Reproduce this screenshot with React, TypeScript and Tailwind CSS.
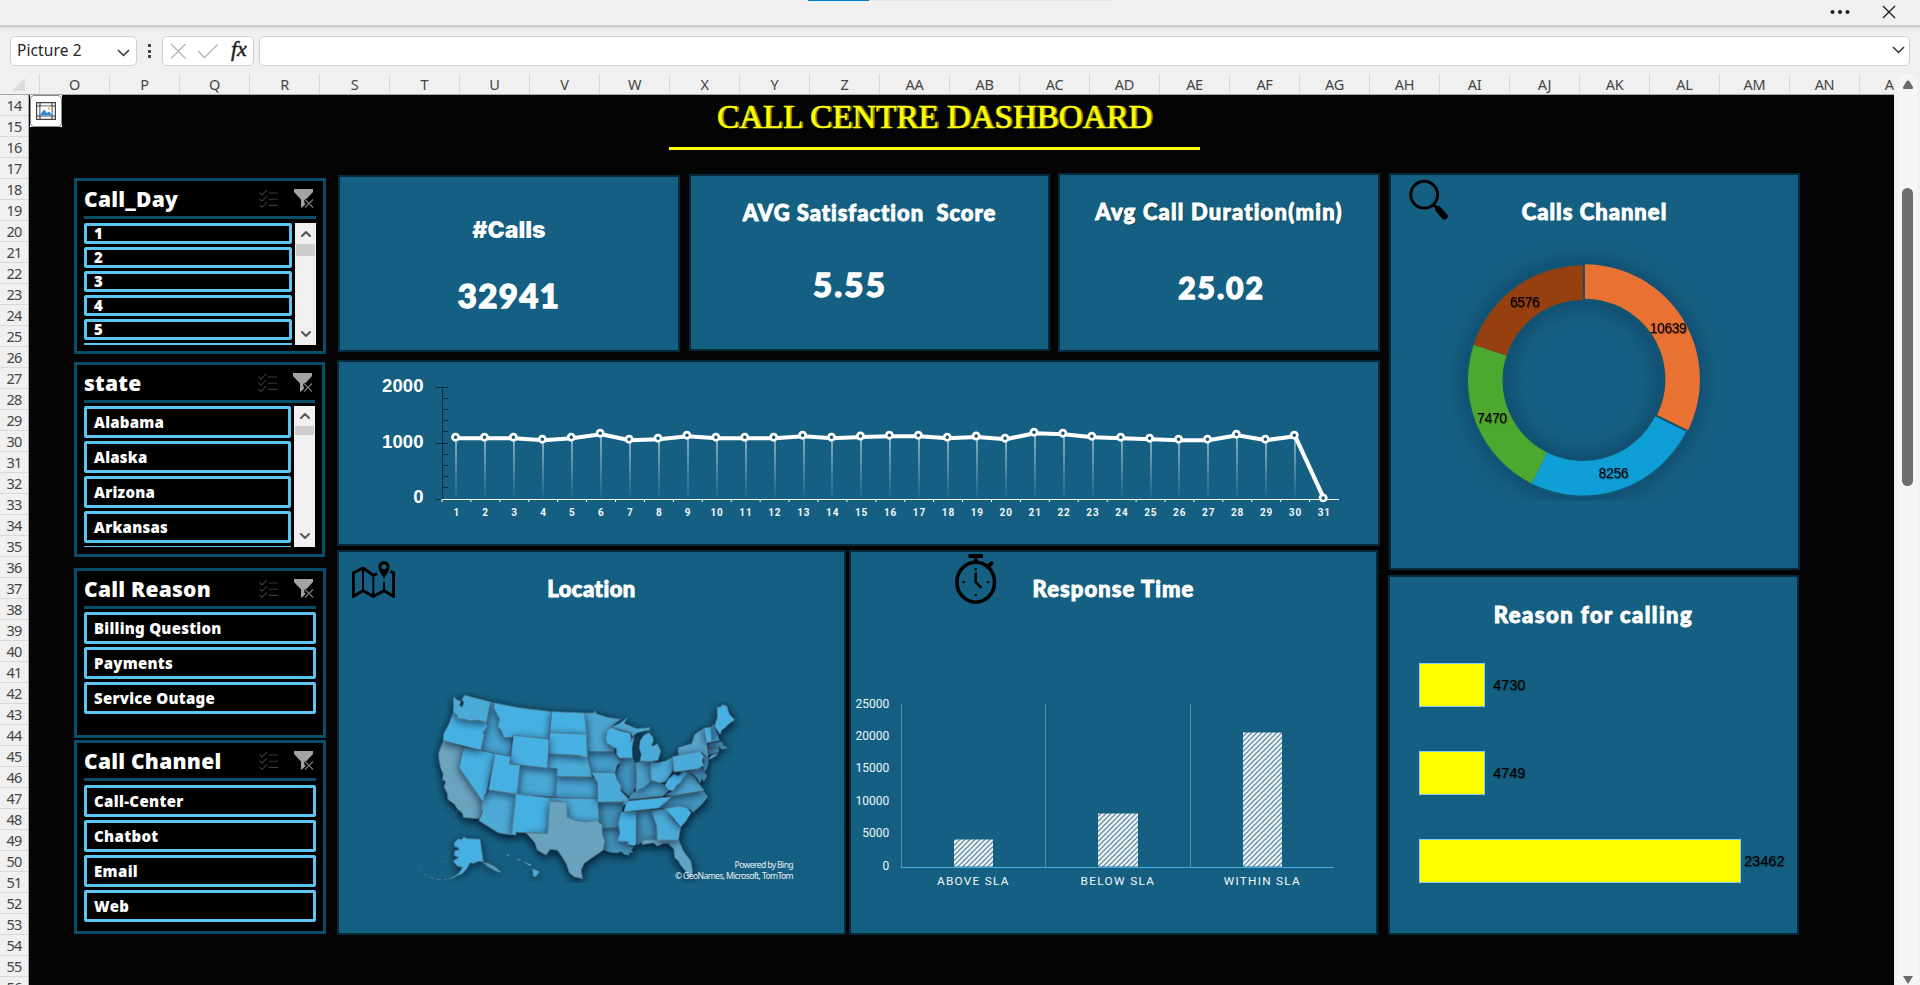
import React from "react";
import { ChevronDown, ChevronUp } from "lucide-react";

const columns = [
  "O", "P", "Q", "R", "S", "T", "U", "V", "W", "X", "Y", "Z", "AA", "AB", "AC", "AD", "AE", "AF", "AG",
  "AH", "AI", "AJ", "AK", "AL", "AM", "AN", "AO",
];
const rows = Array.from({ length: 43 }, (_, i) => i + 14);

/* ---------- Excel chrome ---------- */

function TitleStrip() {
  return (
    <div className="flex h-[25px] shrink-0 items-start justify-between bg-[#f0f0f0]">
      <div className="ml-[808px] flex h-px w-[304px] bg-[#e2e2e2]">
        <div className="h-px w-[61px] bg-[#0078d4]" />
      </div>
      <div className="flex h-[24px] items-center gap-[32px] pr-[24px]">
        <svg width="20" height="6" viewBox="0 0 20 6" fill="#1f1f1f">
          <circle cx="2.5" cy="3" r="2" />
          <circle cx="10" cy="3" r="2" />
          <circle cx="17.5" cy="3" r="2" />
        </svg>
        <svg width="14" height="14" viewBox="0 0 14 14" stroke="#1f1f1f" strokeWidth="1.4">
          <path d="M1 1 L13 13 M13 1 L1 13" />
        </svg>
      </div>
    </div>
  );
}

function FormulaBar() {
  return (
    <div className="flex h-[49px] shrink-0 items-start border-t-2 border-[#cbcbcb] bg-[#f0f0f0] pt-[9px] pl-[10px] shadow-[inset_0_3px_3px_-1px_#e2e2e2]">
      <div className="flex h-[30px] w-[127px] items-center justify-between rounded-[5px] border border-[#cfcfcf] bg-white pr-[6px] pl-[6px]">
        <span className="font-['Noto_Sans',sans-serif] text-[15.5px] tracking-[0.1px] text-[#262626]">Picture 2</span>
        <svg width="13" height="8" viewBox="0 0 13 8" fill="none" stroke="#333" strokeWidth="1.5" className="mt-[3px]">
          <path d="M1 1 L6.5 6.5 L12 1" />
        </svg>
      </div>
      <div className="flex h-[30px] w-[25px] flex-col items-center justify-center gap-[2.5px]">
        <i className="size-[3px] bg-[#444]" />
        <i className="size-[3px] bg-[#444]" />
        <i className="size-[3px] bg-[#444]" />
      </div>
      <div className="flex h-[30px] w-[92px] items-center rounded-[5px] border border-[#cfcfcf] bg-white pl-[5px]">
        <svg width="20" height="18" viewBox="0 0 20 18" fill="none" stroke="#b5b5b5" strokeWidth="1.4">
          <path d="M3 2 L17.5 16.5 M17.5 2 L3 16.5" />
        </svg>
        <svg width="22" height="18" viewBox="0 0 22 18" fill="none" stroke="#b5b5b5" strokeWidth="1.4" className="ml-[9px]">
          <path d="M1 9 L7.5 15.5 L20.5 2.5" />
        </svg>
        <span className="ml-[12px] pb-[4px] font-['Liberation_Serif',serif] text-[22px] leading-none text-[#222] italic [-webkit-text-stroke:0.5px_#222]">
          fx
        </span>
      </div>
      <div className="ml-[5px] flex h-[30px] w-[1651px] items-center justify-end rounded-[5px] border border-[#cfcfcf] bg-white pr-[4px]">
        <svg width="13" height="8" viewBox="0 0 13 8" fill="none" stroke="#333" strokeWidth="1.5" className="mb-[2px]">
          <path d="M1 1 L6.5 6.5 L12 1" />
        </svg>
      </div>
    </div>
  );
}

function ColumnHeader() {
  return (
    <div className="flex h-[21px] w-[1894px] shrink-0 overflow-hidden border-b border-[#a9a9a9] bg-[#f0f0f0]">
      <div className="flex w-[40px] shrink-0 items-end justify-end border-r border-[#d8d8d8] pr-[14px] pb-[3px]">
        <svg width="13" height="13" viewBox="0 0 13 13">
          <path d="M13 0 V13 H0 Z" fill="#dcdcdc" />
        </svg>
      </div>
      {columns.map((c) => (
        <div
          key={c}
          className="flex w-[70px] shrink-0 items-center justify-center border-r border-[#d8d8d8] font-['Noto_Sans',sans-serif] text-[14.5px] leading-none tracking-[-0.3px] text-[#444]"
        >
          {c}
        </div>
      ))}
    </div>
  );
}

function RowHeader() {
  return (
    <div className="h-[890px] w-[29px] shrink-0 overflow-hidden border-r border-[#a9a9a9] bg-[#f0f0f0]">
      {rows.map((r) => (
        <div
          key={r}
          className="flex h-[21px] items-center justify-center border-b border-[#d8d8d8] font-['Noto_Sans',sans-serif] text-[14.5px] leading-none tracking-[-0.8px] text-[#444]"
        >
          {r}
        </div>
      ))}
    </div>
  );
}

function PageScrollbar() {
  return (
    <div className="flex h-[911px] w-[21px] shrink-0 flex-col items-center rounded-t-[10px] bg-[#f5f5f5]">
      <svg width="12" height="10" viewBox="0 0 12 10" className="mt-[6px]">
        <path d="M6 0.5 Q6.8 0.5 7.6 1.6 L11 7 Q11.6 9 10 9 H2 Q0.4 9 1 7 L4.4 1.6 Q5.2 0.5 6 0.5Z" fill="#6b6b6b" />
      </svg>
      <div className="mt-[98px] h-[299px] w-[11px] rounded-full bg-[#6e6e6e]" />
      <svg width="12" height="10" viewBox="0 0 12 10" className="mt-[489px]">
        <path d="M1 1 H11 L6 9Z" fill="#6b6b6b" />
      </svg>
    </div>
  );
}

/* ---------- Slicers ---------- */

function MultiSelectIcon() {
  return (
    <svg width="20" height="19" viewBox="0 0 20 19" fill="none" stroke="#393939" strokeWidth="1.1">
      <path d="M0.5 3.5 L3 6 L8 1 M0.5 9.7 L3 12.2 L8 7.2 M0.5 15.9 L3 18.4 L8 13.4 M9.5 4 H19 M9.5 10.2 H19 M9.5 16.4 H19" />
    </svg>
  );
}

function ClearFilterIcon() {
  return (
    <svg width="20" height="19" viewBox="0 0 20 19" fill="none">
      <path d="M0 0 H19 V3 L12 10.5 V11 L10 13 L11.5 15 L8 18.5 H7 V10.5 L0 3 Z" fill="#a3a3a3" />
      <path d="M11 10.5 L19 18.5 M19 10.5 L11 18.5" stroke="#000" strokeWidth="3" />
      <path d="M11 10.5 L19 18.5 M19 10.5 L11 18.5" stroke="#777" strokeWidth="1.2" />
    </svg>
  );
}

function SlicerScroll({ className, thumb }: { className: string; thumb: string }) {
  return (
    <div className={`flex w-[21px] shrink-0 flex-col items-center justify-between bg-[#f0f0f0] ${className}`}>
      <div className="flex w-full flex-col items-center">
        <div className={`flex items-center ${thumb === "day" ? "h-[21px]" : "h-[20px]"}`}>
          <ChevronUp size={16} strokeWidth={3} color="#555" />
        </div>
        <div className={`w-[19px] bg-[#cdcdcd] ${thumb === "day" ? "h-[12px]" : "h-[9px]"}`} />
      </div>
      <ChevronDown size={16} strokeWidth={3} color="#555" className="mb-[3px]" />
    </div>
  );
}

type SlicerProps = {
  title: string;
  items: string[];
  box: string;
  body: string;
  itemClass: string;
  listClass?: string;
  scroll?: React.ReactNode;
  partial?: string;
};

function Slicer({ title, items, box, body, itemClass, listClass = "", scroll, partial }: SlicerProps) {
  return (
    <section className={`flex flex-col border-[3px] border-[#084e69] bg-black px-[7px] ${box}`}>
      <header className="flex h-[38px] shrink-0 items-start justify-between border-b-[3px] border-[#084e69] pt-[4px] pr-[2px]">
        <h3 className="font-['Noto_Sans',sans-serif] text-[21px] leading-[28px] font-black tracking-[0.25px] whitespace-nowrap text-white">
          {title}
        </h3>
        <div className="flex gap-[15px] pt-[4px]">
          <MultiSelectIcon />
          <ClearFilterIcon />
        </div>
      </header>
      <div className={`flex justify-between ${body}`}>
        <div className={`flex grow flex-col gap-[3px] overflow-hidden ${listClass}`}>
          {items.map((it) => (
            <div
              key={it}
              className={`flex shrink-0 items-center rounded-[2px] border-[3px] border-[#5cc4f1] bg-black pl-[7px] font-['Noto_Sans',sans-serif] font-black whitespace-nowrap text-white ${itemClass}`}
            >
              {it}
            </div>
          ))}
          {partial && <div className={`shrink-0 bg-[#5cc4f1] ${partial}`} />}
        </div>
        {scroll}
      </div>
    </section>
  );
}

/* ---------- Cards ---------- */

const cardBase = "relative shrink-0 border-2 border-[#06293b] bg-[#156082] text-center text-white";

function CardTitle({ children, className }: { children: React.ReactNode; className: string }) {
  return (
    <h2
      className={`font-['Lato',sans-serif] text-[22px] leading-[26px] font-black whitespace-pre [-webkit-text-stroke:0.9px_#fff] ${className}`}
    >
      {children}
    </h2>
  );
}

function Metric({ children, className }: { children: React.ReactNode; className: string }) {
  return (
    <p
      className={`font-['Lato',sans-serif] leading-[36px] font-black whitespace-pre [-webkit-text-stroke:1.3px_#fff] ${className}`}
    >
      {children}
    </p>
  );
}

/* ---------- Daily calls line chart ---------- */

const markerY = [
  82.7, 82.7, 82.7, 84.7, 82.7, 78.7, 84.7, 83.7, 80.7, 82.7, 82.7, 82.7, 80.7, 82.7, 81.5, 80.7, 80.7, 82.7, 81.5,
  83.7, 77.7, 78.7, 81.7, 82.7, 83.7, 84.7, 84.7, 79.7, 84.7, 80.7, 143.4,
];

function LineChart() {
  const left = 103;
  const step = 28.92;
  const base = 144.5;
  const px = (i: number) => left + step * (i + 0.5);
  const font = "'Liberation Sans', sans-serif";
  return (
    <svg width="1039" height="182" viewBox="0 7.5 1039 182" className="block">
      <defs>
        <linearGradient id="drop" x1="0" y1="0" x2="0" y2="1">
          <stop offset="0" stopColor="#fff" />
          <stop offset="1" stopColor="#fff" stopOpacity="0.05" />
        </linearGradient>
      </defs>
      <g fill="#fff" fontFamily={font} fontWeight="700" fontSize="18.5" textAnchor="end">
        <text x="84.5" y="37.5" textLength="41.5">2000</text>
        <text x="84.5" y="93.5" textLength="41.5">1000</text>
        <text x="84.5" y="148.7">0</text>
      </g>
      <g stroke="#0a2e40" strokeWidth="1" shapeRendering="crispEdges">
        <path d="M103.5 32.5 V144.5" />
        {[0, 1, 2, 3, 4, 5, 6, 7, 8, 9, 10].map((i) => (
          <path key={i} d={`M${i % 5 === 0 ? 96 : 103} ${32.5 + i * 11.2} H109`} />
        ))}
      </g>
      {markerY.slice(0, 30).map((y, i) => (
        <rect key={i} x={Math.round(px(i)) - 0.5} y={y} width="1" height={base - y} fill="url(#drop)" />
      ))}
      <path d={`M103 ${base} H1000`} stroke="#fff" strokeWidth="1" shapeRendering="crispEdges" />
      {markerY.map((_, i) => (
        <path key={i} d={`M${left + step * i} ${base} v3`} stroke="#fff" strokeWidth="1" />
      ))}
      <polyline
        points={markerY.map((y, i) => `${px(i)},${y + 1}`).join(" ")}
        fill="none"
        stroke="#fff"
        strokeWidth="4.1"
        strokeLinejoin="round"
      />
      {markerY.map((y, i) => (
        <circle key={i} cx={px(i) - 0.9} cy={y} r="3.1" fill="#12506d" stroke="#fff" strokeWidth="2.7" />
      ))}
      <g fill="#f2f6f8" fontFamily="Roboto, sans-serif" fontWeight="700" fontSize="10" textAnchor="middle" letterSpacing="0.9">
        {markerY.map((_, i) => (
          <text key={i} x={px(i) + 0.3} y="161">
            {i + 1}
          </text>
        ))}
      </g>
    </svg>
  );
}

/* ---------- US map ---------- */

const DARK = "#46a3d2";
const MID = "#4cabd8";
const LIGHT = "#47b0e2";

const states: [string, string][] = [
  ["70,184 131,203 118,265 189,368 185,380 188,393 178,418 130,414 128,402 112,388 104,375 84,360 82,342 72,322 78,308 68,300 70,284 62,265 57,240 56,222 62,205", "#6ba4bf"],
  ["212,68 223,71 222,86 239,120 234,142 244,152 252,174 277,172 270,232 182,212 192,168 189,160 203,141 199,129", DARK],
  ["598,236 640,236 648,250 650,320 642,330 640,348 625,350 602,330 602,318 588,300 590,275 602,250", "#4193bd"],
  ["648,396 694,393 710,440 712,480 665,483 668,497 662,488 655,497 650,492", "#418fb8"],
  ["547,445 597,443 600,460 592,485 625,487 628,500 640,504 634,512 638,520 626,518 628,527 612,524 604,516 590,520 570,518 552,512 554,485 547,465", "#4392ba"],
  ["537,368 612,367 610,378 600,410 597,443 547,445 545,432 537,428", "#4190b8"],
  ["735,388 775,380 800,385 820,398 845,375 863,352 850,335 755,352 715,386", "#4394bd"],
  ["733,348 760,333 780,310 802,280 822,290 838,315 852,333 755,350", "#4ca2cb"],
  ["800,278 848,265 860,290 852,305 845,295 840,310 832,295 820,285", "#3f8bb3"],
  ["300,258 412,268 408,354 291,345", "#4aa7d5"],
  ["411,291 524,294 533,310 534,359 408,354", "#47a2d0"],
  ["625,360 632,348 648,335 670,325 694,303 720,310 735,318 745,335 728,350 620,362", "#489fc9"],
  ["502,217 582,216 590,230 602,248 590,260 585,280 515,280 502,235", "#449dc9"],
  ["648,248 690,246 694,303 686,312 670,325 648,335 650,300", "#499fc8"],
  ["493,101 523,101 525,94 530,104 565,115 602,120 578,138 575,148 558,165 560,180 584,205 584,216 502,216 502,180", "#4ba6d2"],
  ["865,193 905,187 910,200 922,205 905,210 898,202 885,205 865,207", "#3f93bd"],
  ["865,210 896,206 896,218 880,222 868,225", "#3b86ac"],
  ["386,223 475,228 502,235 517,293 411,291 412,268 383,265", MID],
  ["206,331 288,344 275,467 235,460 177,424 188,398 184,375 190,360 193,345 200,345", "#4da9d5"],
  ["666,483 712,480 775,480 790,515 812,545 818,575 815,592 802,590 797,575 780,555 776,545 764,535 762,510 745,492 730,492 712,500 700,490 690,492 668,495", "#60a4c6"],
  ["775,230 775,205 815,193 825,165 852,147 860,190 865,228 862,238 845,218", "#57a3ca"],
  ["848,228 865,240 864,255 856,275 848,262 852,248", "#428fb8"],
  ["865,238 875,228 893,222 885,232 870,239", "#4a9fc8"],
  ["388,355 534,359 537,430 500,428 470,424 441,414 441,369 389,366", MID],
  ["694,393 738,389 760,420 782,445 775,482 712,482 710,440", MID],
  ["603,398 648,396 648,495 640,499 625,495 625,487 592,485 600,460 595,435", LIGHT],
  ["131,203 225,223 199,342 193,345 189,368 118,265", LIGHT],
  ["100,98 111,106 113,118 132,119 150,124 172,122 199,129 203,141 189,160 192,168 182,212 70,184 71,164 88,132", LIGHT],
  ["101,53 112,62 122,66 118,78 126,84 132,70 126,60 134,48 212,68 199,129 172,122 150,124 132,119 113,118 111,106 100,98 101,75", MID],
  ["515,280 585,280 590,300 602,318 602,335 625,358 625,370 610,378 612,367 534,368 533,310", MID],
  ["690,246 712,250 735,246 758,234 760,270 745,295 735,308 720,310 694,303", MID],
  ["873,143 882,135 898,183 875,188", "#439dca"],
  ["575,142 600,132 622,115 612,132 625,138 650,148 690,145 688,152 672,155 650,160 638,172 632,160 600,152", "#4cabd8"],
  ["223,71 300,86 395,97 387,180 281,168 277,174 252,174 244,152 234,142 239,120 222,86", LIGHT],
  ["396,97 493,101 500,165 390,160", LIGHT],
  ["390,160 500,165 502,235 475,228 385,223", LIGHT],
  ["281,168 387,180 382,266 270,253", LIGHT],
  ["225,223 272,232 268,254 300,258 291,345 206,331", LIGHT],
  ["288,344 390,356 383,463 318,460 288,458 287,467 275,465", LIGHT],
  ["562,152 577,145 600,155 630,162 634,180 628,190 642,172 636,205 638,235 598,236 590,225 590,208 560,190 558,172", LIGHT],
  ["672,168 686,160 698,172 700,185 694,198 702,200 712,193 722,215 714,243 690,246 660,245 664,225 658,205 660,185", MID],
  ["620,366 755,352 735,370 715,386 612,397", LIGHT],
  ["735,388 775,380 800,385 813,400 798,425 782,443 760,415", LIGHT],
  ["735,318 745,300 762,285 775,290 790,275 806,280 790,295 780,310 770,318 760,333 745,332", LIGHT],
  ["758,232 840,216 850,230 846,245 850,258 835,268 762,278", MID],
  ["852,147 873,143 875,188 860,190", LIGHT],
  ["884,140 892,115 892,83 902,84 906,76 920,80 928,105 944,122 928,132 915,145 905,152 900,165", LIGHT],
  ["389,366 441,369 441,414 470,424 500,428 530,424 546,436 547,465 554,485 550,512 520,532 492,552 483,572 488,598 462,592 448,580 440,555 425,530 412,512 390,510 378,527 352,512 345,490 318,460 383,463", "#69a2bd"],
  ["103,492 112,480 125,480 132,473 142,478 180,480 190,548 178,545 160,552 150,550 140,568 128,582 108,590 90,600 118,580 128,564 112,560 100,545 116,535 103,528 105,514 118,512 114,504 104,502", LIGHT],
  ["190,550 205,552 225,562 243,578 235,578 222,572 205,562", "#5598bb"],
  ["338,568 358,577 347,592 340,590", LIGHT],
  ["260,527 268,525 266,530", LIGHT],
  ["292,538 302,541 298,544", LIGHT],
  ["312,548 334,556 330,560", LIGHT],
];

function UsMap() {
  return (
    <svg width="420" height="191" viewBox="-120 38 1260 573" className="block overflow-hidden">
      <defs>
        <filter id="lift" x="-60%" y="-60%" width="220%" height="220%">
          <feDropShadow dx="0" dy="6" stdDeviation="13" floodColor="#021824" floodOpacity="0.72" />
        </filter>
        <filter id="ground" x="-20%" y="-20%" width="140%" height="140%">
          <feGaussianBlur stdDeviation="14" />
        </filter>
      </defs>
      <g fill="#04202e" opacity="0.5" transform="translate(4,12)" filter="url(#ground)">
        {states.slice(0, 48).map(([pts], i) => (
          <polygon key={i} points={pts} />
        ))}
      </g>
      <path d="M0 575 l4 3 M14 585 l6 3 M30 594 l10 4 M50 600 l14 2 M72 602 l10 -3 M86 598 l20 -6" stroke="#6a8796" strokeWidth="2" fill="none" />
      <path d="M75 545 h6 M86 524 h5 M85 386 l5 3 M96 395 l4 4 M108 392 l4 8" stroke="#6a8796" strokeWidth="2" fill="none" />
      {states.map(([pts, fill], i) => (
        <polygon key={i} points={pts} fill={fill} stroke="#55788a" strokeWidth="2" strokeLinejoin="round" filter="url(#lift)" />
      ))}
      <path d="M656 166 L662 176 L656 205 L662 228 L656 248 L645 250 L638 235 L638 205 L644 180 Z" fill="#0d3a50" />
    </svg>
  );
}

function MapPinIcon() {
  return (
    <svg width="43" height="37" viewBox="0 0 129 111" fill="none" stroke="#000">
      <path d="M76 38 L64 43 L33 21 L4 36 V106 L33 89 L64 106 L96 89 L125 106 V36 L115 31" strokeWidth="9" />
      <path d="M33 21 V89 M64 43 V106 M96 62 V89" strokeWidth="6" />
      <path d="M96 0 a17 17 0 0 1 17 17 C113 30 100 42 96 55 C92 42 79 30 79 17 A17 17 0 0 1 96 0 Z" fill="#000" stroke="none" />
      <circle cx="96" cy="17" r="7.5" fill="#156082" stroke="none" />
    </svg>
  );
}

function StopwatchIcon() {
  return (
    <svg width="42" height="50" viewBox="0 0 42 50" fill="none" stroke="#000">
      <ellipse cx="20.7" cy="28.2" rx="18.8" ry="20" strokeWidth="3.6" />
      <path d="M13.5 2 H28 M20.7 3 V8" strokeWidth="4" />
      <path d="M33 13 L36.5 9" strokeWidth="4" strokeLinecap="round" />
      <path d="M20.7 18.5 V28 L26.5 34" strokeWidth="2.4" />
      <g fill="#000" stroke="none">
        <rect x="19.6" y="14" width="2.2" height="2.2" />
        <rect x="19.6" y="40" width="2.2" height="2.2" />
        <rect x="7.5" y="27" width="2.2" height="2.2" />
        <rect x="32" y="27" width="2.2" height="2.2" />
      </g>
    </svg>
  );
}

function SearchIcon() {
  return (
    <svg width="40" height="42" viewBox="0 0 40 42" fill="none" stroke="#000">
      <circle cx="15.2" cy="15.7" r="13.4" strokeWidth="2.9" />
      <path d="M24.5 25.5 L28 29" strokeWidth="3" />
      <path d="M29.5 30.5 L35.5 37.3" strokeWidth="6.4" strokeLinecap="round" />
    </svg>
  );
}

/* ---------- Response time column chart ---------- */

function ResponseChart() {
  return (
    <svg width="525" height="200" viewBox="851 695.5 525 200" className="block">
      <defs>
        <pattern id="hatch" width="5" height="5" patternUnits="userSpaceOnUse">
          <rect width="5" height="5" fill="#fff" />
          <path d="M-1 1 L1 -1 M0 5 L5 0 M4 6 L6 4" stroke="#2a6a8a" strokeWidth="1.15" />
        </pattern>
      </defs>
      <g fill="#f1f6f9" fontFamily="Roboto, sans-serif" fontSize="12" textAnchor="end">
        {["25000", "20000", "15000", "10000", "5000", "0"].map((t, i) => (
          <text key={t} x="889.3" y={708 + i * 32.4}>
            {t}
          </text>
        ))}
      </g>
      <g stroke="#5b8fa8" shapeRendering="crispEdges">
        <path d="M901.5 704 V867 M1045.5 704 V867 M1190.5 704 V867" />
      </g>
      <rect x="954" y="840" width="39" height="27" fill="url(#hatch)" />
      <rect x="1098" y="814" width="40" height="53" fill="url(#hatch)" />
      <rect x="1243" y="733" width="39" height="134" fill="url(#hatch)" />
      <path d="M901 867.5 H1334" stroke="#45b0e1" shapeRendering="crispEdges" />
      <g fill="#f1f6f9" fontFamily="Roboto, sans-serif" fontSize="11.8">
        <text x="937" y="885" textLength="71.5">ABOVE SLA</text>
        <text x="1080.5" y="885" textLength="73.5">BELOW SLA</text>
        <text x="1223.7" y="885" textLength="76">WITHIN SLA</text>
      </g>
    </svg>
  );
}

/* ---------- Calls channel doughnut ---------- */

const slices = [
  { value: 10639, fill: "#e97132", dx: 1.9, dy: -1.2, lx: 277.7, ly: 158.3 },
  { value: 8256, fill: "#0f9ed5", dx: 0, dy: 0, lx: 223, ly: 303.3 },
  { value: 7470, fill: "#4ea72e", dx: 0, dy: 0, lx: 101.5, ly: 248.3 },
  { value: 6576, fill: "#97400f", dx: 0, dy: 0, lx: 134.3, ly: 132.3 },
];

function Doughnut() {
  const cx = 192;
  const cy = 205.8;
  const total = slices.reduce((s, v) => s + v.value, 0);
  let acc = 0;
  const arcs = slices.map((s) => {
    const a0 = (acc / total) * 2 * Math.PI;
    acc += s.value;
    const a1 = (acc / total) * 2 * Math.PI;
    const p = (r: number, a: number) => `${cx + s.dx + r * Math.sin(a)} ${cy + s.dy - r * Math.cos(a)}`;
    return { ...s, d: `M${p(115, a0)} A115 115 0 0 1 ${p(115, a1)} L${p(80.5, a1)} A80.5 80.5 0 0 0 ${p(80.5, a0)} Z` };
  });
  return (
    <svg width="407" height="330" viewBox="0 60.3 407 330" className="block">
      <defs>
        <filter id="glow" x="-30%" y="-30%" width="160%" height="160%">
          <feGaussianBlur stdDeviation="12" />
        </filter>
        <filter id="label" x="-20%" y="-20%" width="140%" height="160%">
          <feDropShadow dx="0.5" dy="1.2" stdDeviation="0.7" floodColor="#000" floodOpacity="0.5" />
        </filter>
        <clipPath id="plot">
          <rect x="0" y="60" width="407" height="266" />
        </clipPath>
      </defs>
      <g clipPath="url(#plot)">
        <circle cx={cx} cy={cy} r="98" fill="none" stroke="#0b1f2a" strokeOpacity="0.34" strokeWidth="38" filter="url(#glow)" />
      </g>
      {arcs.map((a) => (
        <path key={a.value} d={a.d} fill={a.fill} />
      ))}
      <g fontFamily="'Liberation Sans', sans-serif" fontSize="14" textAnchor="middle" fill="#000" filter="url(#label)">
        {arcs.map((a) => (
          <text key={a.value} x={a.lx - 0.4} y={a.ly} textLength={a.value > 9999 ? 37 : 30}>
            {a.value}
          </text>
        ))}
      </g>
    </svg>
  );
}

function ReasonBar({ value, bar, gap }: { value: string; bar: string; gap: string }) {
  return (
    <div className={`flex h-[44px] items-center ${gap}`}>
      <div className={`h-[44px] shrink-0 border border-[#7fd0f0] bg-[#ffff00] ${bar}`} />
      <span className="font-['Liberation_Sans',sans-serif] text-[14.6px] leading-none text-black [text-shadow:0.5px_1px_1.5px_rgba(0,0,0,0.5)]">
        {value}
      </span>
    </div>
  );
}

/* ---------- Page ---------- */

function Dashboard() {
  return (
    <main className="relative flex h-[890px] w-[1865px] shrink-0 flex-col overflow-hidden bg-[#040404] pl-[45px]">
      <div className="absolute top-0 left-[1px] flex size-[32px] items-center justify-center bg-white">
        <div className="flex size-[32px] items-center justify-center rounded-[4px] border border-[#8a8a8a] bg-white">
          <svg width="20" height="18" viewBox="0 0 20 18" fill="none" stroke="#444" strokeWidth="1.2">
            <path d="M0.6 0.6 H19.4 V17.4 H0.6 Z M0 4 H20 M0 14 H20 M4 0 V18 M16 0 V18" />
            <rect x="4.6" y="4.6" width="10.8" height="8.8" fill="#fff" stroke="none" />
            <path d="M4.6 12 L8 7.5 L11 11 L13 9.5 L15.4 12 V13.4 H4.6Z" fill="#2b88d8" stroke="none" />
            <circle cx="13" cy="6.6" r="1.1" fill="#f0a050" stroke="none" />
          </svg>
        </div>
      </div>

      <header className="ml-[595px] flex h-[55px] w-[531px] shrink-0 flex-col items-center border-b-[3px] border-[#ffff00] pt-[4px]">
        <h1 className="font-['Liberation_Serif',serif] text-[33px] leading-[37px] font-normal tracking-[0px] whitespace-nowrap text-[#ffff00] [-webkit-text-stroke:0.5px_#ffff00] [text-shadow:2px_0_0_#8a8a00]">
          CALL CENTRE DASHBOARD
        </h1>
      </header>

      <div className="flex items-start pt-[23px]">
        <aside className="mt-[5px] flex w-[252px] shrink-0 flex-col">
          <Slicer
            title="Call_Day"
            items={["1", "2", "3", "4", "5"]}
            box="h-[176px]"
            body="h-[126px] pt-[4px]"
            listClass="mr-[3px]"
            itemClass="h-[21px] text-[15px] leading-[15px]"
            partial="h-[2px]"
            scroll={<SlicerScroll className="h-[122px]" thumb="day" />}
          />
          <Slicer
            title="state"
            items={["Alabama", "Alaska", "Arizona", "Arkansas"]}
            box="mt-[8px] h-[195px] w-[251px]"
            body="h-[144px] pt-[3px]"
            listClass="mr-[3px]"
            itemClass="h-[32px] text-[15px] tracking-[0.25px]"
            partial="h-px"
            scroll={<SlicerScroll className="h-[141px]" thumb="state" />}
          />
          <Slicer
            title="Call Reason"
            items={["Billing Question", "Payments", "Service Outage"]}
            box="mt-[11px] h-[170px]"
            body="pt-[3px]"
            itemClass="h-[32px] text-[15px] tracking-[0.25px]"
          />
          <Slicer
            title="Call Channel"
            items={["Call-Center", "Chatbot", "Email", "Web"]}
            box="mt-[2px] h-[194px]"
            body="pt-[4px]"
            itemClass="h-[32px] text-[15px] tracking-[0.35px]"
          />
        </aside>

        <div className="ml-[11px] flex w-[1043px] shrink-0 flex-col">
          <div className="flex h-[179px] items-start">
            <section className={`${cardBase} mt-[2px] ml-px h-[177px] w-[342px] pt-[40px]`}>
              <h2 className="font-['Inter',sans-serif] text-[23px] leading-[26px] font-black">#Calls</h2>
              <Metric className="mt-[34px] text-[33px] tracking-[1.4px]">32941</Metric>
            </section>
            <section className={`${cardBase} mt-px ml-[9px] h-[177px] w-[361px] pt-[24px]`}>
              <CardTitle className="tracking-[0.95px]">AVG Satisfaction  Score</CardTitle>
              <Metric className="mt-[40px] pr-[39px] text-[33px] tracking-[2.2px]">5.55</Metric>
            </section>
            <section className={`${cardBase} ml-[8px] h-[179px] w-[322px] pt-[24px]`}>
              <CardTitle className="tracking-[1.2px] [text-shadow:1px_1px_2px_rgba(0,0,0,0.45)]">Avg Call Duration(min)</CardTitle>
              <Metric className="mt-[44px] pl-[5px] text-[30px] tracking-[2px]">25.02</Metric>
            </section>
          </div>

          <section className={`${cardBase} mt-[8px] h-[186px] w-[1043px]`}>
            <LineChart />
          </section>

          <div className="mt-[4px] flex gap-[3px]">
            <section className={`${cardBase} flex h-[385px] w-[509px] flex-col pt-[24px]`}>
              <div className="absolute top-[9px] left-[13px]">
                <MapPinIcon />
              </div>
              <CardTitle className="tracking-[0.5px]">Location</CardTitle>
              <div className="mt-[90px] ml-[41px]">
                <UsMap />
              </div>
              <p className="absolute right-[51px] bottom-[51px] text-right font-['Noto_Sans',sans-serif] text-[8.6px] leading-[11px] tracking-[-0.62px] text-[#e6eff4]">
                Powered by Bing
                <br />© GeoNames, Microsoft, TomTom
              </p>
            </section>
            <section className={`${cardBase} flex h-[385px] w-[529px] flex-col pt-[24px]`}>
              <div className="absolute top-[2px] left-[104px]">
                <StopwatchIcon />
              </div>
              <CardTitle className="tracking-[1.05px]">Response Time</CardTitle>
              <div className="mt-[93px]">
                <ResponseChart />
              </div>
            </section>
          </div>
        </div>

        <div className="ml-[8px] flex shrink-0 flex-col gap-[5px]">
          <section className={`${cardBase} ml-px h-[397px] w-[411px] pt-[24px]`}>
            <div className="absolute top-[4px] left-[18px]">
              <SearchIcon />
            </div>
            <CardTitle className="tracking-[1px]">Calls Channel</CardTitle>
            <div className="mt-[10px]">
              <Doughnut />
            </div>
          </section>
          <section className={`${cardBase} flex h-[360px] w-[411px] flex-col pt-[25px]`}>
            <CardTitle className="tracking-[1.45px]">Reason for calling</CardTitle>
            <div className="mt-[35px] ml-[29px] flex flex-col gap-[44px]">
              <ReasonBar value="4730" bar="w-[66px]" gap="gap-[8px]" />
              <ReasonBar value="4749" bar="w-[66px]" gap="gap-[8px]" />
              <ReasonBar value="23462" bar="w-[322px]" gap="gap-[3px]" />
            </div>
          </section>
        </div>
      </div>
    </main>
  );
}

export default function App() {
  return (
    <div className="flex h-[985px] w-[1920px] flex-col overflow-hidden bg-[#f0f0f0]">
      <TitleStrip />
      <FormulaBar />
      <div className="flex">
        <div className="flex w-[1894px] shrink-0 flex-col">
          <ColumnHeader />
          <div className="flex">
            <RowHeader />
            <Dashboard />
          </div>
        </div>
        <div className="ml-[3px]">
          <PageScrollbar />
        </div>
      </div>
    </div>
  );
}
